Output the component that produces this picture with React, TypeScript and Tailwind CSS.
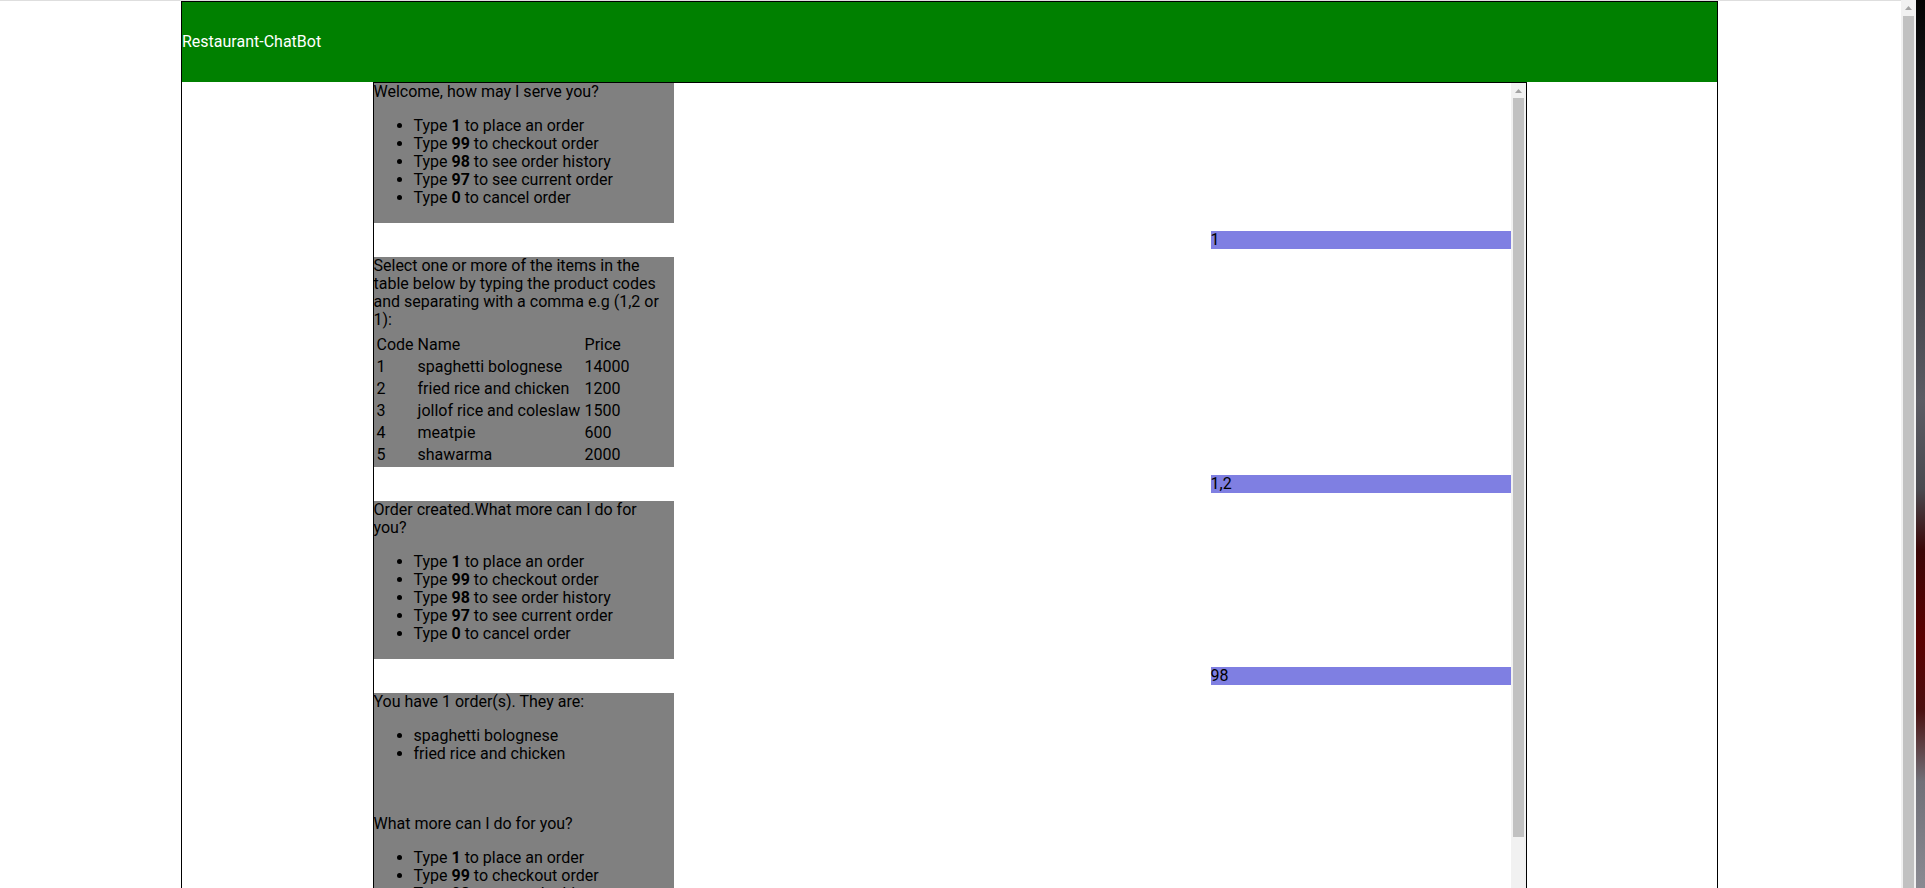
import * as React from "react";

const menu = [
  ["1", "to place an order"],
  ["99", "to checkout order"],
  ["98", "to see order history"],
  ["97", "to see current order"],
  ["0", "to cancel order"],
];

const items = [
  ["1", "spaghetti bolognese", "14000"],
  ["2", "fried rice and chicken", "1200"],
  ["3", "jollof rice and coleslaw", "1500"],
  ["4", "meatpie", "600"],
  ["5", "shawarma", "2000"],
];

function Menu() {
  return (
    <ul className="my-4 list-disc pl-10">
      {menu.map(([code, text]) => (
        <li key={code}>
          Type <b className="font-bold">{code}</b> {text}
        </li>
      ))}
    </ul>
  );
}

function Bot({ children }: { children: React.ReactNode }) {
  return <div className="w-[300px] shrink-0 self-start bg-[#808080] text-black">{children}</div>;
}

function User({ text }: { text: string }) {
  return <div className="h-[18px] w-[300px] shrink-0 self-end bg-[#7f7fe2] text-black">{text}</div>;
}

function UpArrow() {
  return (
    <svg width="7" height="4" viewBox="0 0 7 4" aria-hidden>
      <path d="M3.5 0 L7 4 L0 4 Z" fill="#a3a3a3" />
    </svg>
  );
}

export default function App() {
  return (
    <div className="flex h-[888px] w-[1925px] overflow-hidden bg-white font-['Roboto',sans-serif] text-[16px] leading-[18px]">
      <div className="flex w-[1901px] flex-col">
        <div className="h-px bg-[#dedede]" />
        <div className="ml-[181px] flex min-h-0 w-[1537px] flex-1 flex-col border-x border-t border-black">
          <header className="flex h-[80px] shrink-0 items-center bg-[#008000] text-white">
            Restaurant-ChatBot
          </header>
          <div className="mx-auto flex min-h-0 w-[1154px] flex-1 border-x border-t border-black">
            {/* messages */}
            <div className="flex min-w-0 flex-1 flex-col gap-2 overflow-hidden">
              <Bot>
                <div>Welcome, how may I serve you?</div>
                <Menu />
              </Bot>
              <User text="1" />
              <Bot>
                <div className="whitespace-nowrap">
                  Select one or more of the items in the
                  <br />
                  table below by typing the product codes
                  <br />
                  and separating with a comma e.g (1,2 or
                  <br />
                  1):
                </div>
                <table className="mt-[4px] border-separate border-spacing-[2px]">
                  <tbody>
                    <tr>
                      <td className="w-[38px] p-px leading-[18px]">Code</td>
                      <td className="w-[165px] p-px leading-[18px]">Name</td>
                      <td className="p-px leading-[18px]">Price</td>
                    </tr>
                    {items.map(([c, n, p]) => (
                      <tr key={c}>
                        <td className="p-px leading-[18px]">{c}</td>
                        <td className="whitespace-nowrap p-px leading-[18px]">{n}</td>
                        <td className="p-px leading-[18px]">{p}</td>
                      </tr>
                    ))}
                  </tbody>
                </table>
              </Bot>
              <User text="1,2" />
              <Bot>
                <div className="whitespace-nowrap">
                  Order created.What more can I do for
                  <br />
                  you?
                </div>
                <Menu />
              </Bot>
              <User text="98" />
              <Bot>
                <div>You have 1 order(s). They are:</div>
                <ul className="my-4 list-disc pl-10">
                  <li>spaghetti bolognese</li>
                  <li>fried rice and chicken</li>
                </ul>
                <br />
                <br />
                <div>What more can I do for you?</div>
                <Menu />
              </Bot>
            </div>
            {/* chat scrollbar */}
            <div className="flex w-[15px] shrink-0 flex-col bg-[#f1f1f1]">
              <div className="flex h-[15px] items-center justify-center">
                <UpArrow />
              </div>
              <div className="mx-[2px] h-[739px] bg-[#c1c1c1]" />
            </div>
          </div>
        </div>
      </div>
      {/* page scrollbar */}
      <div className="flex w-[15px] shrink-0 flex-col bg-[#f1f1f1]">
        <div className="flex h-[16px] items-center justify-center">
          <UpArrow />
        </div>
        <div className="mx-[2px] flex-1 bg-[#c1c1c1]" />
      </div>
      <div className="w-[9px] shrink-0 bg-[linear-gradient(to_bottom,#020202_0%,#1c1c20_12%,#3a3a40_28%,#5c5c64_45%,#4a4a50_55%,#3a0606_62%,#5a0000_72%,#4a1010_80%,#707078_88%,#8a8a92_100%)]" />
    </div>
  );
}
